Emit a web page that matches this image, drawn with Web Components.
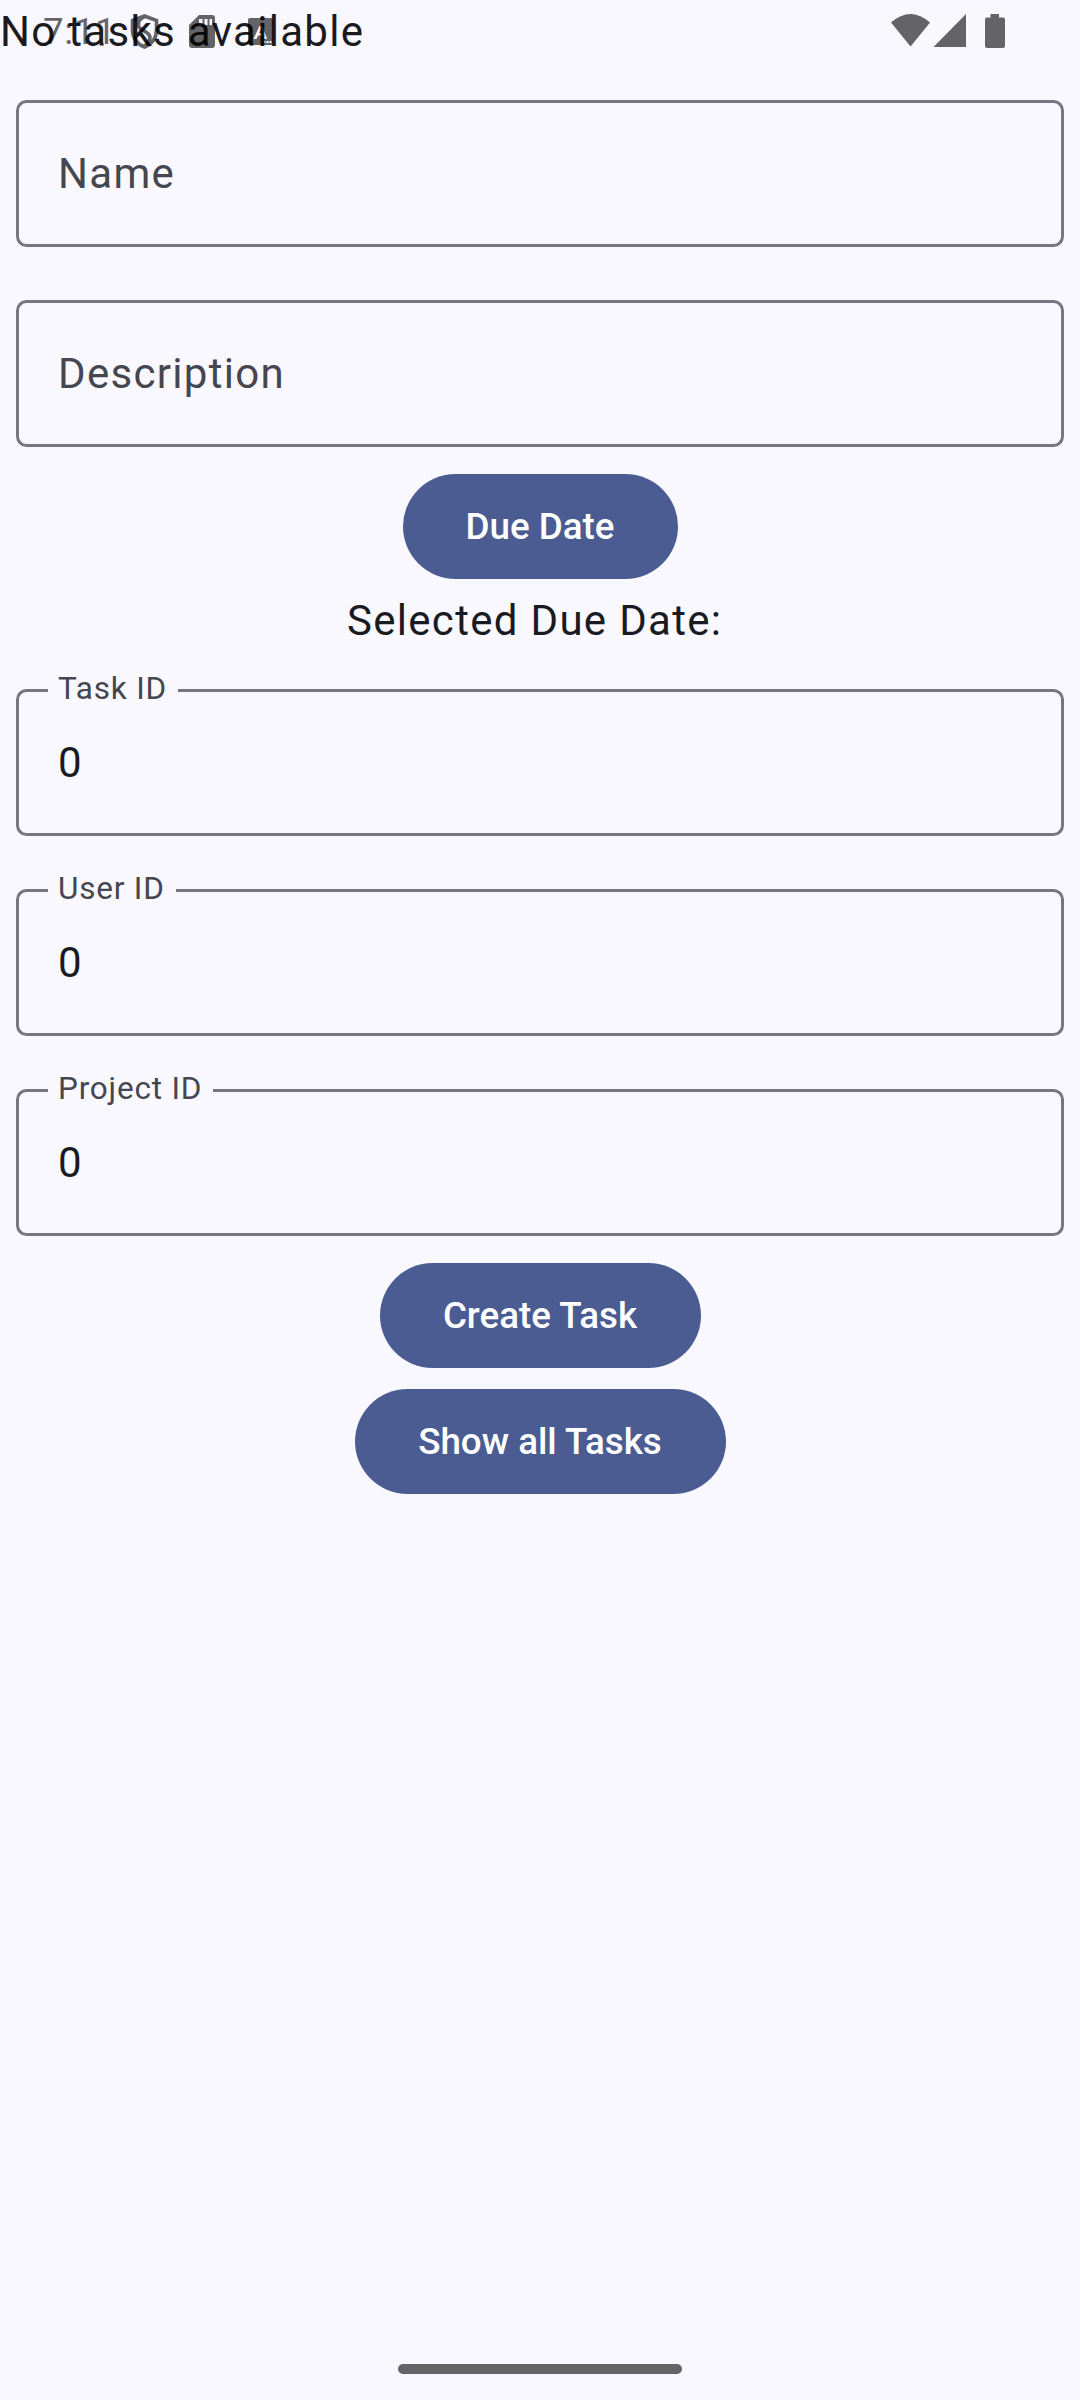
<!DOCTYPE html>
<html lang="en"><head><meta charset="utf-8"><title>Tasks</title>
<style>
body{margin:0;background:#faf8ff;color:#1a1b21;font-family:Roboto,sans-serif}
</style></head><body>
<task-screen></task-screen>
<script>
class Base extends HTMLElement{
  constructor(){super();this.attachShadow({mode:'open'}).innerHTML=this.template();}
  template(){return ''}
}
customElements.define('body-text',class extends Base{
  template(){return `<style>:host{display:block;font-size:42px;line-height:63px;height:63px;letter-spacing:1.3125px;white-space:pre}</style><slot></slot>`}
});
customElements.define('filled-button',class extends Base{
  template(){return `<style>:host{display:flex;justify-content:center;align-items:center;height:126px;padding-left:1px}
  button{all:unset;box-sizing:border-box;height:105px;padding:0 64px 0 63px;border-radius:53px;background:#4a5c92;color:#fff;font-size:36.75px;font-weight:500;line-height:105px;letter-spacing:0;white-space:nowrap}</style><button><slot></slot></button>`}
});
customElements.define('outlined-field',class extends Base{
  template(){return `<style>:host{display:block;padding:16px}
  fieldset{box-sizing:border-box;margin:0;min-width:0;border:3px solid #757680;border-radius:10.5px;height:168px;padding:0 39px 0 29px}
  legend{padding:0 11px 0 10px;margin:0;font-size:31.5px;line-height:42px;height:45px;letter-spacing:.8px;color:#45464f}
  .value{display:block;margin:18px 0 0 10px}
  :host([empty]) fieldset{height:147px;margin-top:21px}
  :host([empty]) legend{display:none}
  :host([empty]) .value{margin-top:39px;color:#45464f}
  </style><fieldset><legend><slot name="label"></slot></legend><body-text class="value"><slot></slot></body-text></fieldset>`}
});
customElements.define('status-bar',class extends Base{
  template(){return `<style>:host{display:flex;justify-content:space-between;height:63px;color:rgba(0,0,0,.6);box-sizing:border-box;padding:0 74px 0 42px}
  .g{display:flex;align-items:center}
  .t{font-size:36.75px;line-height:63px;height:63px;width:87px;letter-spacing:.6px;text-indent:1px;white-space:nowrap}
  svg{display:block;fill:currentColor}</style>
  <div class="g"><span class="t">7:11</span>
  <svg width="144" height="63" viewBox="129 0 144 63">
   <path d="M144.500 16L156.500 20.500V30Q156.500 42 144.500 47Q132.500 42 132.500 30V20.500ZM146 16Q137 19 138.500 26C140 31 149 31 150 37Q150 42 144.500 46" fill="none" stroke="currentColor" stroke-width="3.600"/>
   <path fill-rule="evenodd" d="M199 15H212Q215 15 215 18V45Q215 48 212 48H192Q189 48 189 45V25ZM199 19V25H202.500V19ZM204.500 19V25H207.500V19ZM209.500 19V25H212V19Z"/>
   <path fill-rule="evenodd" d="M250 18H271Q273 18 273 20V43Q273 45 271 45H250Q248 45 248 43V20Q248 18 250 18ZM259.500 26L253.500 39H256.500L258 35.500H263L264.500 39H267L262.500 26ZM261 29L262.200 33H259ZM263.500 41V43H265.500V41ZM266.500 41V43H268.500V41ZM269.500 41V43H271.500V41Z"/>
  </svg></div>
  <svg width="115" height="63" viewBox="891 0 115 63">
   <path d="M891 22.500Q910.500 5.500 930 22.500L910.500 46.500Z"/><path d="M966 14V47H933.500Z"/>
   <path d="M990.500 14H999V17.500H1003Q1005 17.500 1005 19.500V46Q1005 48 1003 48H987Q985 48 985 46V19.500Q985 17.500 987 17.500H990.500Z"/>
  </svg>`}
});
customElements.define('nav-handle',class extends Base{
  template(){return `<style>:host{display:flex;justify-content:center;align-items:center;height:63px}i{display:block;width:284px;height:10px;border-radius:5px;background:rgba(0,0,0,.6)}</style><i></i>`}
});
customElements.define('task-screen',class extends Base{
  template(){return `<style>:host{display:flex;flex-direction:column;height:2400px;position:relative;background:#faf8ff;overflow:hidden}
  status-bar{position:absolute;inset:0 0 auto 0}
  .center{text-align:center;padding-left:1px}
  nav-handle{margin-top:auto}</style>
  <body-text>No tasks available</body-text>
  <outlined-field empty>Name</outlined-field>
  <outlined-field empty>Description</outlined-field>
  <filled-button>Due Date</filled-button>
  <body-text class="center">Selected Due Date: </body-text>
  <outlined-field><span slot="label">Task ID</span>0</outlined-field>
  <outlined-field><span slot="label">User ID</span>0</outlined-field>
  <outlined-field><span slot="label">Project ID</span>0</outlined-field>
  <filled-button>Create Task</filled-button>
  <filled-button>Show all Tasks</filled-button>
  <nav-handle></nav-handle>
  <status-bar></status-bar>`}
});
</script></body></html>
